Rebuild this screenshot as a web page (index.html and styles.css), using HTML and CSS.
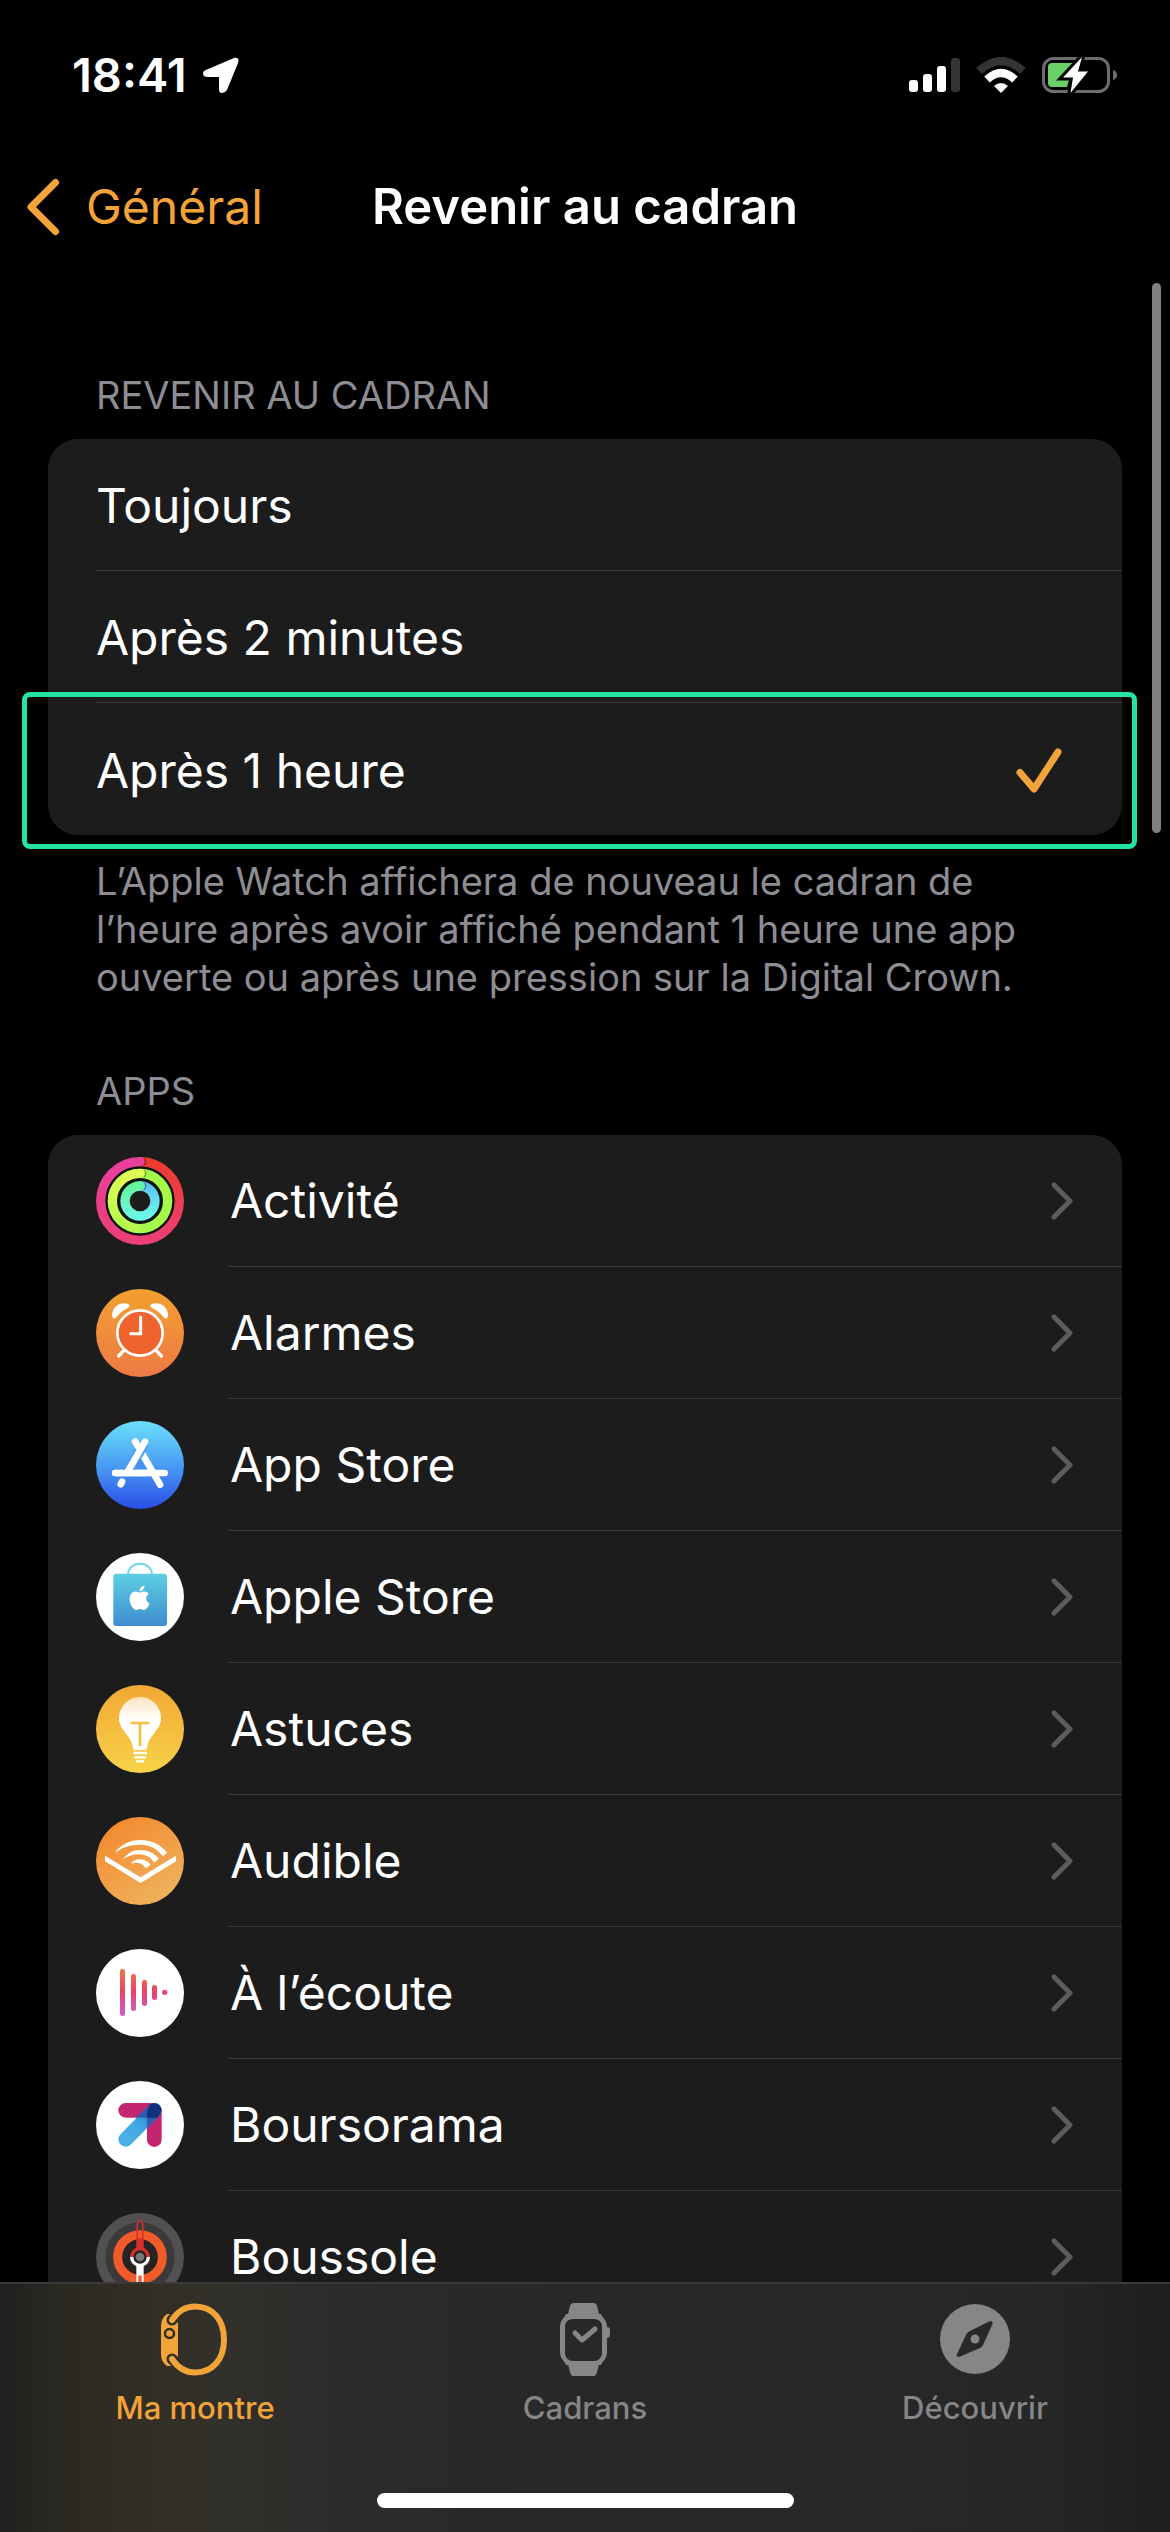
FILE: index.html
```html
<!DOCTYPE html>
<html lang="fr">
<head>
<meta charset="utf-8">
<meta name="viewport" content="width=device-width, initial-scale=1">
<title>Revenir au cadran</title>
<link rel="stylesheet" href="styles.css">
</head>
<body>
<div class="screen">
  <div class="status">
    <div class="status-side">
      <span class="clock">18:41</span>
      <svg class="location" viewBox="0 0 36 36" aria-hidden="true"><path d="M31 1Q37 0 35 6L24 33Q22 36 19 36Q16 36 16 32V20H5Q0 20 0 16.500Q0 14 4 12.500Z" fill="#fff"/></svg>
    </div>
    <div class="status-side">
      <svg class="signal" viewBox="0 0 51 36" aria-hidden="true"><rect x="0" y="23" width="9" height="12" rx="3" fill="#fff"/><rect x="14" y="17" width="9" height="18" rx="3" fill="#fff"/><rect x="28" y="9" width="9" height="26" rx="3" fill="#fff"/><rect x="42" y="1" width="9" height="34" rx="3" fill="#343434"/></svg>
      <svg class="wifi" viewBox="0 0 50 36" aria-hidden="true"><g fill="none" stroke-width="8"><path d="M3 14Q25-6 47 14" stroke="#343434"/><path d="M11 22.500Q25 9.500 39 22.500" stroke="#fff"/></g><path d="M25 36L18 29Q25 23 32 29Z" fill="#fff"/></svg>
      <svg class="battery" viewBox="0 0 76 38" aria-hidden="true"><rect x="1.500" y="2.500" width="65" height="33" rx="10" fill="none" stroke="#6d6b70" stroke-width="3"/><path d="M71 14Q75 15 75 19T71 24Z" fill="#6d6b70"/><path d="M10 7H32L25 31H10Q6 31 6 27V11Q6 7 10 7Z" fill="#67d168"/><path d="M40 1L21 21.500H31L28.500 37L46 15.500H36Z" fill="#fff" stroke="#000" stroke-width="6" paint-order="stroke"/></svg>
    </div>
  </div>

  <header class="nav">
    <a class="back" href="#general"><svg class="back-icon" viewBox="0 0 34 58" aria-hidden="true"><path d="M29.500 4.500L5 29L29.500 53.500" fill="none" stroke="currentColor" stroke-width="7" stroke-linecap="round" stroke-linejoin="round"/></svg>Général</a>
    <h1 class="title">Revenir au cadran</h1>
  </header>

  <main class="content">
    <div class="scroll-thumb"></div>
    <fieldset class="section">
      <legend class="section-title">REVENIR AU CADRAN</legend>
      <div class="group">
        <label class="option"><span class="option-line">Toujours<span class="tick"><input type="radio" name="delay"></span></span></label>
        <label class="option"><span class="option-line">Après 2 minutes<span class="tick"><input type="radio" name="delay"></span></span></label>
        <label class="option highlighted"><span class="option-line">Après 1 heure<span class="tick"><input type="radio" name="delay" checked><svg viewBox="0 0 46 46" aria-hidden="true"><path d="M4 24.500L18 41L42 4" fill="none" stroke="currentColor" stroke-width="7" stroke-linecap="round" stroke-linejoin="round"/></svg></span></span></label>
      </div>
      <p class="note">L’Apple Watch affichera de nouveau le cadran de l’heure après avoir affiché pendant 1 heure une app ouverte ou après une pression sur la Digital Crown.</p>
    </fieldset>

    <section class="section">
      <h2 class="section-title">APPS</h2>
      <div class="group">
        <a class="app" href="#activite">
          <svg class="app-icon" viewBox="0 0 264 264" aria-hidden="true">
            <defs>
              <linearGradient id="r1" x1="0" y1="0" x2="0" y2="1"><stop offset="0" stop-color="#ee3b2c"/><stop offset="1" stop-color="#ec3f76"/></linearGradient>
              <linearGradient id="r2" x1="0" y1="0" x2="0" y2="1"><stop offset="0" stop-color="#e93f9e"/><stop offset="1" stop-color="#ec3f76"/></linearGradient>
              <linearGradient id="g2" x1="0" y1="0" x2="0" y2="1"><stop offset="0" stop-color="#e0ff55"/><stop offset="1" stop-color="#b4fb4c"/></linearGradient>
              <linearGradient id="b1" x1="0" y1="0" x2="0" y2="1"><stop offset="0" stop-color="#5cc4f6"/><stop offset="1" stop-color="#6cf8ea"/></linearGradient>
              <linearGradient id="b2" x1="0" y1="0" x2="0" y2="1"><stop offset="0" stop-color="#66f3a0"/><stop offset="1" stop-color="#6cf8e0"/></linearGradient>
            </defs>
            <circle cx="132" cy="132" r="110" fill="#0c130c"/><circle cx="132" cy="132" r="32" fill="#1c1c1c"/>
            <g fill="none" stroke-width="28">
              <path d="M132 14A118 118 0 0 1 132 250" stroke="url(#r1)"/><path d="M132 250A118 118 0 0 1 132 14" stroke="url(#r2)"/>
              <path d="M132 49A83 83 0 0 1 132 215" stroke="#a6f94b"/><path d="M132 215A83 83 0 0 1 132 49" stroke="url(#g2)"/>
              <path d="M132 87A45 45 0 0 1 132 177" stroke="url(#b1)"/><path d="M132 177A45 45 0 0 1 132 87" stroke="url(#b2)"/>
            </g>
            <g opacity=".35"><circle cx="139" cy="15" r="12"/><circle cx="139" cy="50" r="12"/><circle cx="139" cy="88" r="12"/></g>
            <circle cx="132" cy="14" r="14" fill="#e93f9e"/><circle cx="133" cy="49" r="14" fill="#e0ff55"/><circle cx="133" cy="87" r="14" fill="#66f3a0"/>
          </svg>
          <span class="app-line">Activité<svg class="chevron" viewBox="0 0 22 38" aria-hidden="true"><path d="M3 3L19 19L3 35"/></svg></span></a>
        <a class="app" href="#alarmes">
          <svg class="app-icon" viewBox="0 0 264 264" aria-hidden="true">
            <defs><linearGradient id="al" x1="0" y1="0" x2="0" y2="1"><stop offset="0" stop-color="#f3a02f"/><stop offset="1" stop-color="#ee7946"/></linearGradient></defs>
            <circle cx="132" cy="132" r="132" fill="url(#al)"/>
            <g fill="none" stroke="#fff" stroke-linecap="round"><path d="M83 185L68 201M181 185L196 201" stroke-width="10"/><circle cx="132" cy="132" r="68" fill="#ee632e" stroke-width="8"/><path d="M134 84V134H104" stroke-width="9"/></g>
            <path d="M58 88Q50 92 49 82C46 54 72 36 96 45Q106 49 97 56Q75 66 58 88ZM206 88Q214 92 216 82C218 54 192 36 168 45Q158 49 167 56Q189 66 206 88Z" fill="#fff"/>
          </svg>
          <span class="app-line">Alarmes<svg class="chevron" viewBox="0 0 22 38" aria-hidden="true"><path d="M3 3L19 19L3 35"/></svg></span></a>
        <a class="app" href="#app-store">
          <svg class="app-icon" viewBox="0 0 264 264" aria-hidden="true">
            <defs><linearGradient id="as" x1="0" y1="0" x2="0" y2="1"><stop offset="0" stop-color="#6be0fb"/><stop offset=".5" stop-color="#4a9df3"/><stop offset="1" stop-color="#2a4de6"/></linearGradient></defs>
            <circle cx="132" cy="132" r="132" fill="url(#as)"/>
            <g fill="none" stroke="#fff" stroke-width="20" stroke-linecap="round"><path d="M118 62L192 191"/><path d="M58 156H206"/></g>
            <path d="M144 68L92 158" fill="none" stroke="#4b9df3" stroke-width="31"/>
            <path d="M58 156H150" fill="none" stroke="#fff" stroke-width="20" stroke-linecap="round"/>
            <path d="M118 62L128 79M147 62L94 154" fill="none" stroke="#fff" stroke-width="20" stroke-linecap="round"/>
            <path d="M78 182L74 190" fill="none" stroke="#fff" stroke-width="20" stroke-linecap="round"/>
            <path d="M132 115L116 144H149Z" fill="#468ff1"/>
          </svg>
          <span class="app-line">App Store<svg class="chevron" viewBox="0 0 22 38" aria-hidden="true"><path d="M3 3L19 19L3 35"/></svg></span></a>
        <a class="app" href="#apple-store">
          <svg class="app-icon" viewBox="0 0 264 264" aria-hidden="true">
            <defs><linearGradient id="ap" x1="0" y1="0" x2="0" y2="1"><stop offset="0" stop-color="#5dd0e2"/><stop offset="1" stop-color="#3f8ccf"/></linearGradient></defs>
            <circle cx="132" cy="132" r="132" fill="#fff"/><path d="M96 64A36 32 0 0 1 168 64" fill="none" stroke="#6bd7e8" stroke-width="6"/><rect x="52" y="62" width="161" height="157" rx="9" fill="url(#ap)"/>
            <path transform="translate(94 98) scale(3.050)" fill="#fff" d="M12.152 6.896c-.948 0-2.415-1.078-3.960-1.040-2.040.027-3.910 1.183-4.961 3.014-2.117 3.675-.546 9.103 1.519 12.090 1.013 1.454 2.208 3.090 3.792 3.039 1.520-.065 2.090-.987 3.935-.987 1.831 0 2.350.987 3.960.948 1.637-.026 2.676-1.480 3.676-2.948 1.156-1.688 1.636-3.325 1.662-3.415-.039-.013-3.182-1.221-3.220-4.857-.026-3.040 2.480-4.494 2.597-4.559-1.429-2.090-3.623-2.324-4.390-2.376-2-.156-3.675 1.090-4.610 1.090zM15.530 3.830c.843-1.012 1.400-2.427 1.245-3.830-1.207.052-2.662.805-3.532 1.818-.780.896-1.454 2.338-1.273 3.714 1.338.104 2.715-.688 3.559-1.701"/>
          </svg>
          <span class="app-line">Apple Store<svg class="chevron" viewBox="0 0 22 38" aria-hidden="true"><path d="M3 3L19 19L3 35"/></svg></span></a>
        <a class="app" href="#astuces">
          <svg class="app-icon" viewBox="0 0 264 264" aria-hidden="true">
            <defs><linearGradient id="ti" x1="0" y1="0" x2="0" y2="1"><stop offset="0" stop-color="#f2a735"/><stop offset="1" stop-color="#f8d348"/></linearGradient><linearGradient id="bu" x1="0" y1="0" x2="0" y2="1"><stop offset="0" stop-color="#fbe5c2"/><stop offset=".45" stop-color="#fff"/></linearGradient></defs>
            <circle cx="132" cy="132" r="132" fill="url(#ti)"/>
            <path d="M132 36A63 63 0 0 1 195 99C195 138 156 150 153 190Q152 195 148 195H116Q112 195 111 190C108 150 69 138 69 99A63 63 0 0 1 132 36Z" fill="url(#bu)"/>
            <path d="M104 114H160M132 114V183" fill="none" stroke="#f4bd3e" stroke-width="8"/>
            <path d="M112 204H153M115 217H150M120 229H144" fill="none" stroke="#fff" stroke-width="7"/>
          </svg>
          <span class="app-line">Astuces<svg class="chevron" viewBox="0 0 22 38" aria-hidden="true"><path d="M3 3L19 19L3 35"/></svg></span></a>
        <a class="app" href="#audible">
          <svg class="app-icon" viewBox="0 0 264 264" aria-hidden="true">
            <defs><linearGradient id="au" x1=".2" y1=".1" x2=".8" y2="1"><stop offset="0" stop-color="#f38c31"/><stop offset="1" stop-color="#efb45f"/></linearGradient></defs>
            <circle cx="132" cy="132" r="132" fill="url(#au)"/>
            <path fill="#fff" d="M27 116L134 181L240 116V133L134 198L27 133ZM55 108C80 76 110 68 137 69C170 71 197 85 213 107L201 118C180 92 158 82 132 83C102 83 78 92 55 108ZM80 127C98 104 116 98 134 99C158 100 177 110 188 125L175 137C164 121 148 112 130 112C112 112 97 117 80 127ZM104 140C113 129 122 126 133 127C147 128 157 134 164 143L150 154C143 143 132 137 122 137Q113 137 104 140Z"/>
          </svg>
          <span class="app-line">Audible<svg class="chevron" viewBox="0 0 22 38" aria-hidden="true"><path d="M3 3L19 19L3 35"/></svg></span></a>
        <a class="app" href="#a-l-ecoute">
          <svg class="app-icon" viewBox="0 0 264 264" aria-hidden="true">
            <defs><linearGradient id="ec" gradientUnits="userSpaceOnUse" x1="0" y1="60" x2="0" y2="201"><stop offset="0" stop-color="#ee7544"/><stop offset=".5" stop-color="#e8426a"/><stop offset="1" stop-color="#c860cf"/></linearGradient></defs>
            <circle cx="132" cy="132" r="132" fill="#fff"/>
            <g fill="url(#ec)"><rect x="72" y="60" width="15" height="141" rx="7"/><rect x="105" y="75" width="15" height="111" rx="7"/><rect x="138" y="93" width="15" height="78" rx="7"/><rect x="168" y="108" width="15" height="45" rx="7"/><circle cx="206" cy="130" r="8"/></g>
          </svg>
          <span class="app-line">À l’écoute<svg class="chevron" viewBox="0 0 22 38" aria-hidden="true"><path d="M3 3L19 19L3 35"/></svg></span></a>
        <a class="app" href="#boursorama">
          <svg class="app-icon" viewBox="0 0 264 264" aria-hidden="true">
            <defs><linearGradient id="bo" gradientUnits="userSpaceOnUse" x1="89" y1="175" x2="175" y2="88"><stop offset="0" stop-color="#4cb0e6"/><stop offset=".5" stop-color="#3fa5e2"/><stop offset="1" stop-color="#2678c8"/></linearGradient></defs>
            <circle cx="132" cy="132" r="132" fill="#fff"/>
            <g fill="none" stroke-width="44" stroke-linecap="round"><path d="M89 88H175V176" stroke="#c4256f" stroke-linejoin="round"/><path d="M89 175L175 88" stroke="url(#bo)"/></g>
            <path d="M160 72Q175 61 190 73Q203 88 191 103L153 142V110H120Z" fill="#2b4fa0" opacity=".75"/><path d="M153 95L160 72Q175 61 190 73Q203 88 184 110H153Z" fill="#142f7e"/>
          </svg>
          <span class="app-line">Boursorama<svg class="chevron" viewBox="0 0 22 38" aria-hidden="true"><path d="M3 3L19 19L3 35"/></svg></span></a>
        <a class="app" href="#boussole">
          <svg class="app-icon" viewBox="0 0 264 264" aria-hidden="true">
            <circle cx="132" cy="132" r="132" fill="#525050"/><circle cx="132" cy="132" r="104" fill="#3b3939"/><circle cx="132" cy="132" r="67" fill="#272323" stroke="#f15a29" stroke-width="27"/>
            <path d="M124 80V32Q132 16 140 32V80Z" fill="none" stroke="#d8302a" stroke-width="5"/><path d="M121 76H143V110H121Z" fill="#d8302a"/>
            <g fill="none" stroke-width="10"><path d="M107 132A25 25 0 0 1 157 132" stroke="#d8302a"/><path d="M107 132A25 25 0 0 0 157 132" stroke="#fff"/></g>
            <path d="M121 154H143V240H121Z" fill="#fff"/><path d="M127 188H137V240H127Z" fill="#f15a29"/><circle cx="132" cy="132" r="13" fill="#777"/>
          </svg>
          <span class="app-line">Boussole<svg class="chevron" viewBox="0 0 22 38" aria-hidden="true"><path d="M3 3L19 19L3 35"/></svg></span></a>
      </div>
    </section>
  </main>

  <footer class="tabbar">
    <nav class="tabs">
      <a class="tab active" href="#ma-montre">
        <svg class="tab-icon" viewBox="0 0 74 74" aria-hidden="true">
          <mask id="strap-gap"><rect width="74" height="74" fill="#fff"/><path d="M14 18Q27 5 37 5M14 57Q27 70 37 70" fill="none" stroke="#000" stroke-width="11" stroke-linecap="round"/></mask>
          <path d="M9 12H20V64H9Q3 60 3 52V24Q3 16 9 12Z" fill="currentColor" mask="url(#strap-gap)"/>
          <path d="M14 18C20 9 28 4.500 37 4.500C55 4.500 66 18 66 37.500C66 57 55 70.500 37 70.500C28 70.500 20 66 14 57" fill="none" stroke="currentColor" stroke-width="6" stroke-linecap="round"/>
          <circle cx="11.500" cy="31.500" r="4.500" fill="none" stroke="#322e22" stroke-width="2.500"/>
        </svg>Ma montre</a>
      <a class="tab" href="#cadrans">
        <svg class="tab-icon" viewBox="0 0 74 74" aria-hidden="true">
          <path d="M25 1H46Q48 1 49 4L51 12H20L22 4Q23 1 25 1ZM20 62H51L49 70Q48 74 46 74H25Q23 74 22 70Z" fill="currentColor"/>
          <rect x="14.500" y="14" width="42" height="47" rx="11" fill="none" stroke="currentColor" stroke-width="5"/><path d="M18 12H53L56 18H15ZM15 57H56L53 63H18Z" fill="currentColor"/><rect x="17" y="17" width="37" height="42" rx="8" fill="#282828"/>
          <path d="M59 25Q62 25 62 28V33Q62 36 59 36Z" fill="currentColor"/><path d="M27 31L34 38L47 27" fill="none" stroke="currentColor" stroke-width="5" stroke-linecap="round" stroke-linejoin="round"/>
        </svg>Cadrans</a>
      <a class="tab" href="#decouvrir">
        <svg class="tab-icon" viewBox="0 0 74 74" aria-hidden="true"><circle cx="37" cy="37" r="35" fill="currentColor"/><path d="M52 19Q55 19 54.500 22L45 43Q44 45 42 46L21 55Q18 55 19 52L28 33Q29 30.500 31 29.500Z" fill="#282828"/><circle cx="37" cy="37" r="4.500" fill="currentColor"/></svg>Découvrir</a>
    </nav>
    <div class="home-indicator"></div>
  </footer>
</div>
</body>
</html>
```
FILE: styles.css
```css
* { box-sizing: border-box; }

body {
  margin: 0;
  background: #000;
  color: #fff;
  font-family: Inter, "Liberation Sans", sans-serif;
  font-size: 48px;
  line-height: 48px;
}

a { color: inherit; text-decoration: none; }
svg { display: block; flex: none; }

.screen {
  display: flex;
  flex-direction: column;
  height: 100vh;
}

/* Status bar */
.status {
  display: flex;
  justify-content: space-between;
  align-items: center;
  height: 141px;
  padding: 8px 52px 0 72px;
}
.status-side { display: flex; align-items: center; gap: 16px; }
.clock { font-size: 47px; font-weight: 600; }
.location { width: 36px; height: 36px; }
.signal { width: 51px; height: 36px; }
.wifi { width: 50px; height: 36px; }
.battery { width: 76px; height: 38px; }

/* Navigation bar */
.nav {
  display: grid;
  grid-template-columns: 1fr auto 1fr;
  align-items: center;
  height: 132px;
  padding: 0 26px;
}
.back { display: flex; align-items: center; gap: 26px; color: #f2a33a; }
.back-icon { width: 34px; height: 58px; }
.title { margin: 0; font-size: 49px; font-weight: 600; }

/* Lists */
.content {
  position: relative;
  flex: 1;
  min-height: 0;
  padding: 98px 48px 0;
  overflow-y: auto;
  scrollbar-width: none;
}
.scroll-thumb {
  position: absolute;
  top: 10px;
  right: 9px;
  width: 9px;
  height: 550px;
  border-radius: 5px;
  background: #808080;
}
.section { margin: 0 0 66px; padding: 0; border: 0; min-width: 0; }
.section-title {
  margin: 0;
  padding: 0 48px 20px;
  color: #8d8d93;
  font-size: 38px;
  font-weight: 400;
  line-height: 48px;
}
.group { border-radius: 30px; background: #1c1c1d; }
.option { display: block; position: relative; padding-left: 48px; }
.option-line, .app-line {
  display: flex;
  flex: 1;
  justify-content: space-between;
  align-items: center;
  height: 132px;
  border-bottom: 1px solid #3b3b3e;
}
.option-line { padding: 3px 60px 0 0; }
.option:last-child .option-line, .app:last-child .app-line { border-bottom: 0; }
.tick { display: grid; width: 46px; height: 46px; color: #f2a33a; }
.tick > * { grid-area: 1 / 1; width: 46px; height: 46px; }
.tick input { appearance: none; margin: 0; }
.highlighted::after {
  content: "";
  position: absolute;
  inset: -11px -15px -14px -26px;
  border: 5px solid #25e4a3;
  border-radius: 8px;
}
.note {
  margin: 0;
  padding: 22px 48px 0;
  color: #8d8d93;
  font-size: 38px;
  line-height: 48px;
}
.app { display: flex; align-items: center; gap: 44px; padding-left: 48px; }
.app-icon { width: 88px; height: 88px; }
.app-line { padding: 0 49px 0 2px; }
.chevron {
  width: 22px;
  height: 38px;
  fill: none;
  stroke: #5b5b60;
  stroke-width: 5px;
  stroke-linecap: round;
  stroke-linejoin: round;
}

/* Tab bar */
.tabbar {
  position: relative;
  display: flex;
  flex-direction: column;
  justify-content: space-between;
  align-items: center;
  height: 250px;
  padding: 18px 0 24px;
  border-top: 2px solid #3a3a3a;
  background: linear-gradient(90deg, #20201f 0%, #2a2822 5%, #332e23 12%, #31302a 19%, #2c2c2b 27%, #282828 45%, #272727 88%, #1e1e1e 100%);
}
.tabs { display: grid; grid-template-columns: repeat(3, 1fr); width: 100%; }
.tab {
  display: flex;
  flex-direction: column;
  align-items: center;
  gap: 12px;
  color: #868686;
  font-size: 31px;
  font-weight: 500;
  line-height: 40px;
}
.tab.active { color: #f2a33a; }
.tab-icon { width: 74px; height: 74px; }
.home-indicator { width: 417px; height: 15px; border-radius: 8px; background: #fff; }
```
